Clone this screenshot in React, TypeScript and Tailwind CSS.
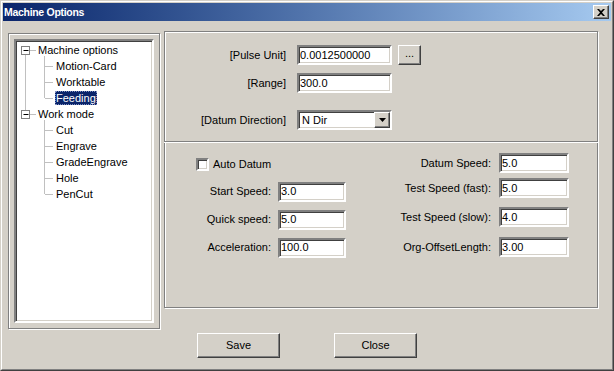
import React from "react";

const font = { fontFamily: '"Liberation Sans", Arial, sans-serif' };

const etched = "border border-[#808080] shadow-[inset_1px_1px_0_#fff,1px_1px_0_#fff]";
const sunken =
  "border-2 border-t-[#808080] border-l-[#808080] border-b-white border-r-white shadow-[inset_1px_1px_0_#404040,inset_-1px_-1px_0_#d4d0c8]";
const raised =
  "border border-t-white border-l-white border-b-[#404040] border-r-[#404040] shadow-[inset_-1px_-1px_0_#808080]";

const Field = ({ value, width }: { value: string; width: string }) => (
  <div className={`${sunken} ${width} h-[20px] bg-white flex items-center pl-[1px] text-[11px] leading-none`}>
    {value}
  </div>
);

const treeRows: { label: string; level: number; selected?: boolean }[] = [
  { label: "Machine options", level: 0 },
  { label: "Motion-Card", level: 1 },
  { label: "Worktable", level: 1 },
  { label: "Feeding", level: 1, selected: true },
  { label: "Work mode", level: 0 },
  { label: "Cut", level: 1 },
  { label: "Engrave", level: 1 },
  { label: "GradeEngrave", level: 1 },
  { label: "Hole", level: 1 },
  { label: "PenCut", level: 1 },
];

const TreeLines = () => {
  // coordinates relative to white area (origin at page x=16, y=41)
  const ox = 16;
  const oy = 41;
  const X = (x: number) => x - ox + 0.5;
  const Y = (y: number) => y - oy + 0.5;
  const dot = { stroke: "#808080", strokeDasharray: "1 1", strokeWidth: 1 };
  const box = (cy: number) => (
    <g key={cy}>
      <rect x={X(21)} y={Y(cy - 4)} width={8} height={8} fill="#fff" stroke="#808080" />
      <line x1={X(23)} x2={X(28)} y1={Y(cy)} y2={Y(cy)} stroke="#000" />
    </g>
  );
  const rows1 = [66, 82, 98];
  const rows2 = [130, 146, 162, 178, 194];
  return (
    <svg className="absolute left-0 top-0" width="140" height="200">
      <line x1={X(25)} x2={X(25)} y1={Y(55)} y2={Y(110)} {...dot} />
      <line x1={X(30)} x2={X(35)} y1={Y(50)} y2={Y(50)} {...dot} />
      <line x1={X(30)} x2={X(35)} y1={Y(114)} y2={Y(114)} {...dot} />
      <line x1={X(44)} x2={X(44)} y1={Y(56)} y2={Y(98)} {...dot} />
      <line x1={X(44)} x2={X(44)} y1={Y(120)} y2={Y(194)} {...dot} />
      {[...rows1, ...rows2].map((y) => (
        <line key={y} x1={X(45)} x2={X(53)} y1={Y(y)} y2={Y(y)} {...dot} />
      ))}
      {box(50)}
      {box(114)}
    </svg>
  );
};

export default function App() {
  return (
    <div
      style={font}
      className="w-[614px] h-[371px] bg-[#d4d0c8] text-black border border-t-[#d4d0c8] border-l-[#d4d0c8] border-r-[#404040] border-b-[#404040]"
    >
      <div className="w-full h-full border border-t-white border-l-white border-r-[#808080] border-b-[#808080] p-[1px] flex flex-col">
        {/* title bar */}
        <div className="h-[18px] flex items-center justify-between bg-gradient-to-r from-[#0a246a] to-[#a6caf0] pl-[1px] pr-[2px]">
          <span className="text-white font-bold text-[10.5px] leading-none tracking-[-0.3px]">Machine Options</span>
          <div className={`${raised} w-[16px] h-[14px] bg-[#d4d0c8] flex items-center justify-center`}>
            <svg width="8" height="7" viewBox="0 0 8 7">
              <path d="M0 0h2l2 2 2-2h2L5 3.5 8 7H6L4 5 2 7H0l3-3.5z" fill="#000" />
            </svg>
          </div>
        </div>

        <div className="flex items-start">
          {/* tree */}
          <div className={`${etched} ml-[5px] mt-[12px] w-[152px] h-[296px] p-[5px]`}>
            <div className={`${sunken} w-full h-full bg-white relative`}>
              <TreeLines />
              <div className="relative pt-[1px] text-[11px] leading-none">
                {treeRows.map((r) => (
                  <div
                    key={r.label}
                    className={`h-[16px] flex items-center ${r.level === 0 ? "pl-[21px]" : "pl-[39px]"}`}
                  >
                    {r.selected ? (
                      <span className="bg-[#0a246a] text-white px-[1px] h-[14px] flex items-center outline outline-1 outline-dotted outline-[#8090c0] -outline-offset-1">
                        {r.label}
                      </span>
                    ) : (
                      <span className="px-[1px]">{r.label}</span>
                    )}
                  </div>
                ))}
              </div>
            </div>
          </div>

          {/* right side */}
          <div className="ml-[4px] mt-[10px] flex flex-col">
            <div className={`${etched} w-[434px] h-[277px] flex flex-col`}>
              {/* upper */}
              <div className="h-[109px] pt-[13px] text-[11px]">
                <div className="flex items-center">
                  <div className="w-[121px] text-right">[Pulse Unit]</div>
                  <div className="ml-[11px]">
                    <Field value="0.0012500000" width="w-[95px]" />
                  </div>
                  <div className={`${raised} ml-[6px] w-[23px] h-[20px] bg-[#d4d0c8] flex items-center justify-center pb-[3px] text-[11px]`}>
                    ...
                  </div>
                </div>
                <div className="flex items-center mt-[8px]">
                  <div className="w-[121px] text-right">[Range]</div>
                  <div className="ml-[11px]">
                    <Field value="300.0" width="w-[95px]" />
                  </div>
                </div>
                <div className="flex items-center mt-[17px]">
                  <div className="w-[121px] text-right">[Datum Direction]</div>
                  <div className={`${sunken} ml-[11px] w-[95px] h-[20px] bg-white flex items-center justify-between`}>
                    <span className="pl-[3px] text-[11px] leading-none">N Dir</span>
                    <div className={`${raised} w-[16px] h-[16px] bg-[#d4d0c8] flex items-center justify-center`}>
                      <svg width="7" height="4" viewBox="0 0 7 4">
                        <path d="M0 0h7L3.5 4z" fill="#000" />
                      </svg>
                    </div>
                  </div>
                </div>
              </div>
              {/* divider */}
              <div className="h-[2px] border-t border-[#808080] shadow-[inset_0_1px_0_#fff] -mx-[1px]" />
              {/* lower */}
              <div className="flex text-[11px]">
                <div className="w-[190px] flex flex-col">
                  <div className="flex items-center mt-[13px] ml-[31px]">
                    <div className={`${sunken} w-[13px] h-[13px] bg-white`} />
                    <span className="ml-[4px]">Auto Datum</span>
                  </div>
                  <div className="flex items-center mt-[9px]">
                    <div className="w-[106px] text-right">Start Speed:</div>
                    <div className="ml-[7px]">
                      <Field value="3.0" width="w-[68px]" />
                    </div>
                  </div>
                  <div className="flex items-center mt-[8px]">
                    <div className="w-[106px] text-right">Quick speed:</div>
                    <div className="ml-[7px]">
                      <Field value="5.0" width="w-[68px]" />
                    </div>
                  </div>
                  <div className="flex items-center mt-[8px]">
                    <div className="w-[106px] text-right">Acceleration:</div>
                    <div className="ml-[7px]">
                      <Field value="100.0" width="w-[68px]" />
                    </div>
                  </div>
                </div>
                <div className="flex flex-col">
                  <div className="flex items-center mt-[10px]">
                    <div className="w-[136px] text-right">Datum Speed:</div>
                    <div className="ml-[8px]">
                      <Field value="5.0" width="w-[70px]" />
                    </div>
                  </div>
                  <div className="flex items-center mt-[5px]">
                    <div className="w-[136px] text-right">Test Speed (fast):</div>
                    <div className="ml-[8px]">
                      <Field value="5.0" width="w-[70px]" />
                    </div>
                  </div>
                  <div className="flex items-center mt-[9px]">
                    <div className="w-[136px] text-right">Test Speed (slow):</div>
                    <div className="ml-[8px]">
                      <Field value="4.0" width="w-[70px]" />
                    </div>
                  </div>
                  <div className="flex items-center mt-[10px]">
                    <div className="w-[136px] text-right">Org-OffsetLength:</div>
                    <div className="ml-[8px]">
                      <Field value="3.00" width="w-[70px]" />
                    </div>
                  </div>
                </div>
              </div>
            </div>

            {/* buttons */}
            <div className="flex mt-[25px] ml-[33px] gap-[54px] text-[11px]">
              <div className={`${raised} w-[83px] h-[25px] bg-[#d4d0c8] flex items-center justify-center`}>Save</div>
              <div className={`${raised} w-[83px] h-[25px] bg-[#d4d0c8] flex items-center justify-center`}>Close</div>
            </div>
          </div>
        </div>
      </div>
    </div>
  );
}
